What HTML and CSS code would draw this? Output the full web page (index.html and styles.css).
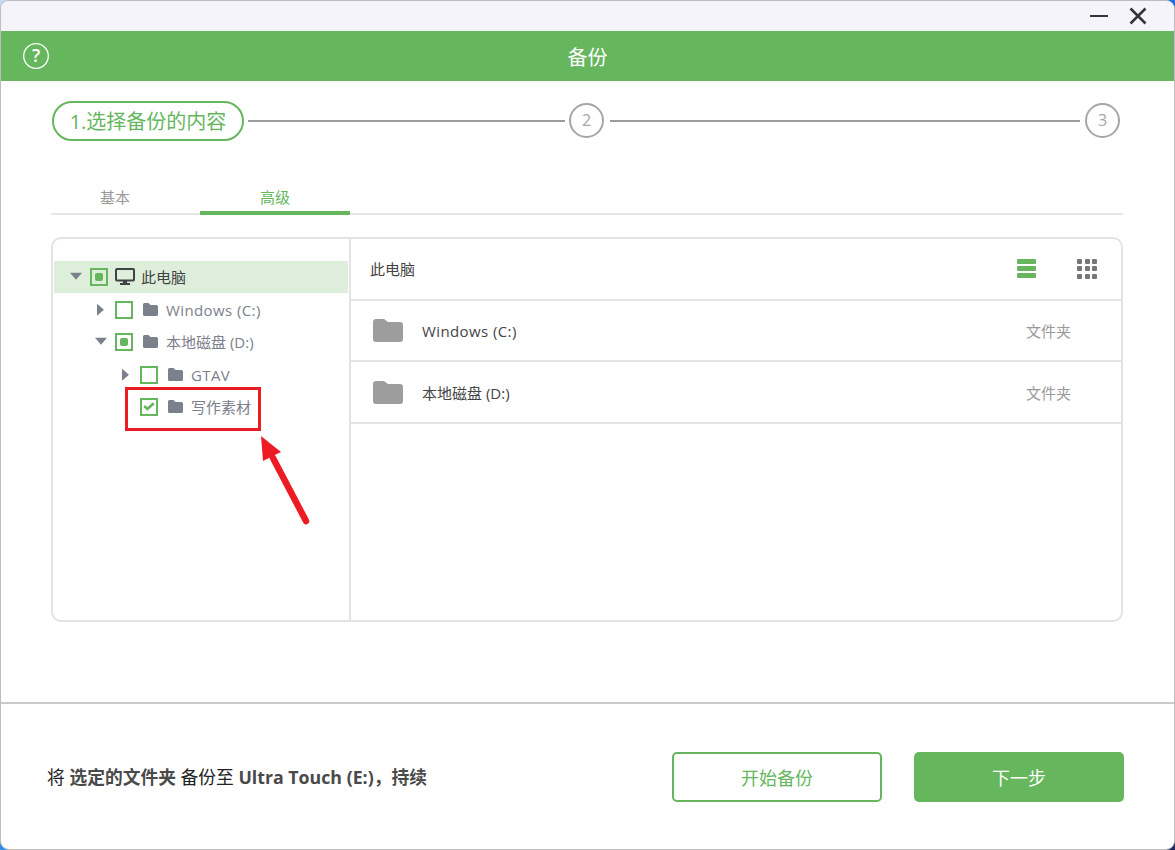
FILE: index.html
```html
<!DOCTYPE html>
<html lang="zh-CN">
<head>
    <meta charset="UTF-8">
    <meta name="viewport" content="width=device-width, initial-scale=1.0">
    <title>备份</title>
    <link rel="stylesheet" href="styles.css">
</head>
<body>

    <div class="window">
        <div class="titlebar">
            <svg class="win-btn" width="18" height="4" viewBox="0 0 18 4"><rect y="1" width="18" height="2" fill="#33343c"/></svg>
            <svg class="win-btn" width="18" height="18" viewBox="0 0 18 18"><path d="M1.5 1.5 L16.5 16.5 M16.5 1.5 L1.5 16.5" stroke="#33343c" stroke-width="2.6" fill="none"/></svg>
        </div>

        <div class="header">
            <svg class="help" width="28" height="28" viewBox="0 0 28 28">
                <circle cx="14" cy="14" r="12.3" fill="none" stroke="#fff" stroke-width="1.3"/>
                <text x="14" y="20" text-anchor="middle" class="help-mark">?</text>
            </svg>
            <span>备份</span>
        </div>

        <div class="stepper">
            <div class="step-current">1.选择备份的内容</div>
            <div class="step-line first"></div>
            <div class="step-num">2</div>
            <div class="step-line"></div>
            <div class="step-num">3</div>
        </div>

        <div class="tabs">
            <div class="tab">基本</div>
            <div class="tab active">高级</div>
        </div>

        <div class="panel">
            <div class="tree">
                <div class="tree-row selected level-0">
                    <i class="caret down"></i>
                    <i class="check part"></i>
                    <svg class="monitor" width="20" height="17" viewBox="0 0 20 17">
                        <rect x="1" y="1" width="18" height="11.5" rx="1" fill="none" stroke="#3f4346" stroke-width="2"/>
                        <rect x="8" y="13" width="4" height="2" fill="#3f4346"/>
                        <rect x="5" y="15" width="10" height="2" fill="#3f4346"/>
                    </svg>
                    <span class="dark">此电脑</span>
                </div>
                <div class="tree-row level-1">
                    <i class="caret right"></i>
                    <i class="check"></i>
                    <svg class="folder" width="15" height="13" viewBox="0 0 15 13"><path d="M0 1.5 Q0 0 1.5 0 H5.5 L7.5 2 H13.5 Q15 2 15 3.5 V11.5 Q15 13 13.5 13 H1.5 Q0 13 0 11.5 Z" fill="#7c808c"/></svg>
                    <span class="latin">Windows (C:)</span>
                </div>
                <div class="tree-row level-1">
                    <i class="caret down"></i>
                    <i class="check part"></i>
                    <svg class="folder" width="15" height="13" viewBox="0 0 15 13"><path d="M0 1.5 Q0 0 1.5 0 H5.5 L7.5 2 H13.5 Q15 2 15 3.5 V11.5 Q15 13 13.5 13 H1.5 Q0 13 0 11.5 Z" fill="#7c808c"/></svg>
                    <span>本地磁盘 (D:)</span>
                </div>
                <div class="tree-row level-2">
                    <i class="caret right"></i>
                    <i class="check"></i>
                    <svg class="folder" width="15" height="13" viewBox="0 0 15 13"><path d="M0 1.5 Q0 0 1.5 0 H5.5 L7.5 2 H13.5 Q15 2 15 3.5 V11.5 Q15 13 13.5 13 H1.5 Q0 13 0 11.5 Z" fill="#7c808c"/></svg>
                    <span class="latin">GTAV</span>
                </div>
                <div class="tree-row level-2">
                    <i class="caret none"></i>
                    <i class="check">
                        <svg width="12" height="9" viewBox="0 0 12 9"><path d="M1.2 4 L4.4 7 L10.8 1.2" stroke="#66b65e" stroke-width="2.6" fill="none"/></svg>
                    </i>
                    <svg class="folder" width="15" height="13" viewBox="0 0 15 13"><path d="M0 1.5 Q0 0 1.5 0 H5.5 L7.5 2 H13.5 Q15 2 15 3.5 V11.5 Q15 13 13.5 13 H1.5 Q0 13 0 11.5 Z" fill="#7c808c"/></svg>
                    <span>写作素材</span>
                </div>
            </div>

            <div class="list">
                <div class="list-head">
                    <span>此电脑</span>
                    <div class="views">
                        <div class="view-list"><b></b><b></b><b></b></div>
                        <div class="view-grid"><b></b><b></b><b></b><b></b><b></b><b></b><b></b><b></b><b></b></div>
                    </div>
                </div>
                <div class="list-row">
                    <svg width="30" height="23" viewBox="0 0 30 23"><path d="M0 3 Q0 0 3 0 H11 L15 3 H27 Q30 3 30 6 V20 Q30 23 27 23 H3 Q0 23 0 20 Z" fill="#9d9d9d"/></svg>
                    <span class="list-name latin">Windows (C:)</span>
                    <span class="list-type">文件夹</span>
                </div>
                <div class="list-row">
                    <svg width="30" height="23" viewBox="0 0 30 23"><path d="M0 3 Q0 0 3 0 H11 L15 3 H27 Q30 3 30 6 V20 Q30 23 27 23 H3 Q0 23 0 20 Z" fill="#9d9d9d"/></svg>
                    <span class="list-name">本地磁盘 (D:)</span>
                    <span class="list-type">文件夹</span>
                </div>
            </div>
        </div>

        <div class="footer">
            <p class="summary">将 <b>选定的文件夹</b> 备份至 <b>Ultra Touch (E:)，持续</b></p>
            <button class="btn-outline">开始备份</button>
            <button class="btn-fill">下一步</button>
        </div>

        <!-- 红框和箭头是截图上的标注 -->
        <div class="mark-box"></div>
        <svg class="mark-arrow" width="60" height="100" viewBox="0 0 60 100">
            <path d="M46 85 L13 22" stroke="#ed1c24" stroke-width="6.5" stroke-linecap="round" fill="none"/>
            <path d="M1 0 L21 16 L3 25 Z" fill="#ed1c24"/>
        </svg>
    </div>

</body>
</html>
```

FILE: styles.css
```css
* {
    box-sizing: border-box;
}

body {
    margin: 0;
    height: 850px;
    overflow: hidden;
    background: conic-gradient(#1b6fe0 25%, #1c2a5e 25% 50%, #2f8fe8 50% 75%, #c4d8ee 75%);
    font-family: "Open Sans", "Noto Sans CJK SC", sans-serif;
}

.window {
    position: relative;
    height: 850px;
    background-color: #fff;
    border: 1px solid #bdbdbd;
    border-radius: 9px;
    overflow: hidden;
    display: flex;
    flex-direction: column;
}

.titlebar {
    height: 30px;
    background-color: #f4f4fa;
    display: flex;
    justify-content: flex-end;
    align-items: center;
    gap: 21px;
    padding: 0 27px 0 0;
}

.header {
    height: 50px;
    padding-top: 1px;
    background-color: #66b65e;
    color: #fff;
    font-size: 20px;
    display: flex;
    justify-content: center;
    align-items: center;
    position: relative;
}

.help {
    position: absolute;
    left: 21px;
    top: 11px;
}

.help-mark {
    fill: #fff;
    font-size: 18px;
    font-weight: 600;
}

.stepper {
    display: flex;
    align-items: center;
    height: 40px;
    margin-top: 20px;
    padding: 0 54px 0 51px;
}

.step-current {
    width: 192px;
    height: 40px;
    border: 2px solid #66b65e;
    border-radius: 20px;
    color: #66b65e;
    font-size: 20px;
    line-height: 37px;
    text-align: center;
    white-space: nowrap;
}

.step-line {
    flex: 1;
    height: 2px;
    background-color: #9b9b9b;
    margin: 0 5px 0 6px;
}

.step-line.first {
    flex: none;
    width: 317px;
    margin: 0 4px;
}

.step-num {
    width: 35px;
    height: 35px;
    border: 2px solid #a6a6a6;
    border-radius: 50%;
    color: #a6a6a6;
    font-size: 16px;
    line-height: 31px;
    text-align: center;
}

.tabs {
    display: flex;
    height: 30px;
    margin: 44px 51px 0 50px;
    border-bottom: 2px solid #e6e6e6;
}

.tab {
    width: 128px;
    margin-right: 21px;
    height: 30px;
    color: #999;
    font-size: 15px;
    line-height: 24px;
    text-align: center;
}

.tab.active {
    width: 150px;
    margin-right: 0;
    color: #66b65e;
    border-bottom: 4px solid #66b65e;
}

.panel {
    display: flex;
    height: 387px;
    margin: 22px 51px 0 50px;
    border: 2px solid #e3e3e3;
    border-radius: 10px;
    overflow: hidden;
}

.tree {
    width: 298px;
    flex-shrink: 0;
    padding: 22px 1px 0 1px;
    border-right: 2px solid #e3e3e3;
}

.tree-row {
    height: 32px;
    display: flex;
    align-items: center;
    color: #7c808c;
    font-size: 15px;
    white-space: nowrap;
}

/* строки идут через 32.5px */
.tree-row:nth-child(even) {
    height: 33px;
    padding-top: 1px;
}

.tree-row .latin {
    letter-spacing: 0.4px;
}

.tree-row.selected {
    background-color: #ddeedb;
}

.level-0 {
    padding-left: 15px;
}

.level-1 {
    padding-left: 40px;
}

.level-2 {
    padding-left: 65px;
}

.tree-row .dark {
    color: #3f4346;
}

.caret {
    width: 14px;
    height: 12px;
    margin-right: 7px;
    flex-shrink: 0;
    display: block;
    background-color: #7c808c;
}

.caret.down {
    clip-path: polygon(1px 2px, 13px 2px, 7px 9px);
}

.caret.right {
    clip-path: polygon(3px 0, 10px 6px, 3px 12px);
}

.caret.none {
    background: none;
}

.check {
    width: 18px;
    height: 18px;
    border: 2px solid #66b65e;
    flex-shrink: 0;
    display: flex;
    justify-content: center;
    align-items: center;
}

.check.part::before {
    content: "";
    width: 8px;
    height: 8px;
    background-color: #66b65e;
    border-radius: 2px;
}

.monitor {
    margin: 0 6px 0 7px;
}

.folder {
    margin: 0 8px 0 10px;
}

.list {
    flex: 1;
    color: #444;
    font-size: 15px;
}

.list-head {
    height: 62px;
    display: flex;
    justify-content: space-between;
    align-items: center;
    padding: 0 24px 0 19px;
    border-bottom: 2px solid #e3e3e3;
}

.views {
    display: flex;
    align-items: center;
    gap: 41px;
}

.view-list {
    width: 19px;
    display: flex;
    flex-direction: column;
    gap: 2px;
}

.view-list b {
    height: 5px;
    background-color: #66b65e;
    border-radius: 1px;
}

.view-grid {
    display: grid;
    grid-template-columns: repeat(3, 5px);
    gap: 2.5px;
}

.view-grid b {
    height: 5px;
    background-color: #767676;
    border-radius: 1px;
}

.list-row {
    height: 61.5px;
    display: flex;
    align-items: center;
    padding: 0 50px 0 22px;
    border-bottom: 2px solid #e3e3e3;
}

.list-name {
    margin-left: 19px;
    flex: 1;
}

.list-name.latin {
    letter-spacing: 0.4px;
}

.list-type {
    color: #999;
}

.footer {
    display: flex;
    align-items: center;
    height: 147px;
    margin-top: 80px;
    padding: 0 50px 0 46px;
    border-top: 2px solid #c9c9c9;
}

.summary {
    flex: 1;
    margin: 0 0 2px;
    color: #222;
    font-size: 17.75px;
    white-space: nowrap;
}

.summary b {
    color: #4a4a4a;
    font-weight: bold;
}

button {
    width: 210px;
    height: 50px;
    border-radius: 5px;
    font-family: inherit;
    font-size: 18px;
    cursor: pointer;
}

.btn-outline {
    background-color: #fff;
    border: 2px solid #66b65e;
    color: #66b65e;
    margin-right: 32px;
}

.btn-fill {
    background-color: #66b65e;
    border: none;
    color: #fff;
}

.mark-box {
    position: absolute;
    left: 124px;
    top: 386px;
    width: 136px;
    height: 44px;
    border: 3px solid #ed1c24;
}

.mark-arrow {
    position: absolute;
    left: 259px;
    top: 435px;
}
```
